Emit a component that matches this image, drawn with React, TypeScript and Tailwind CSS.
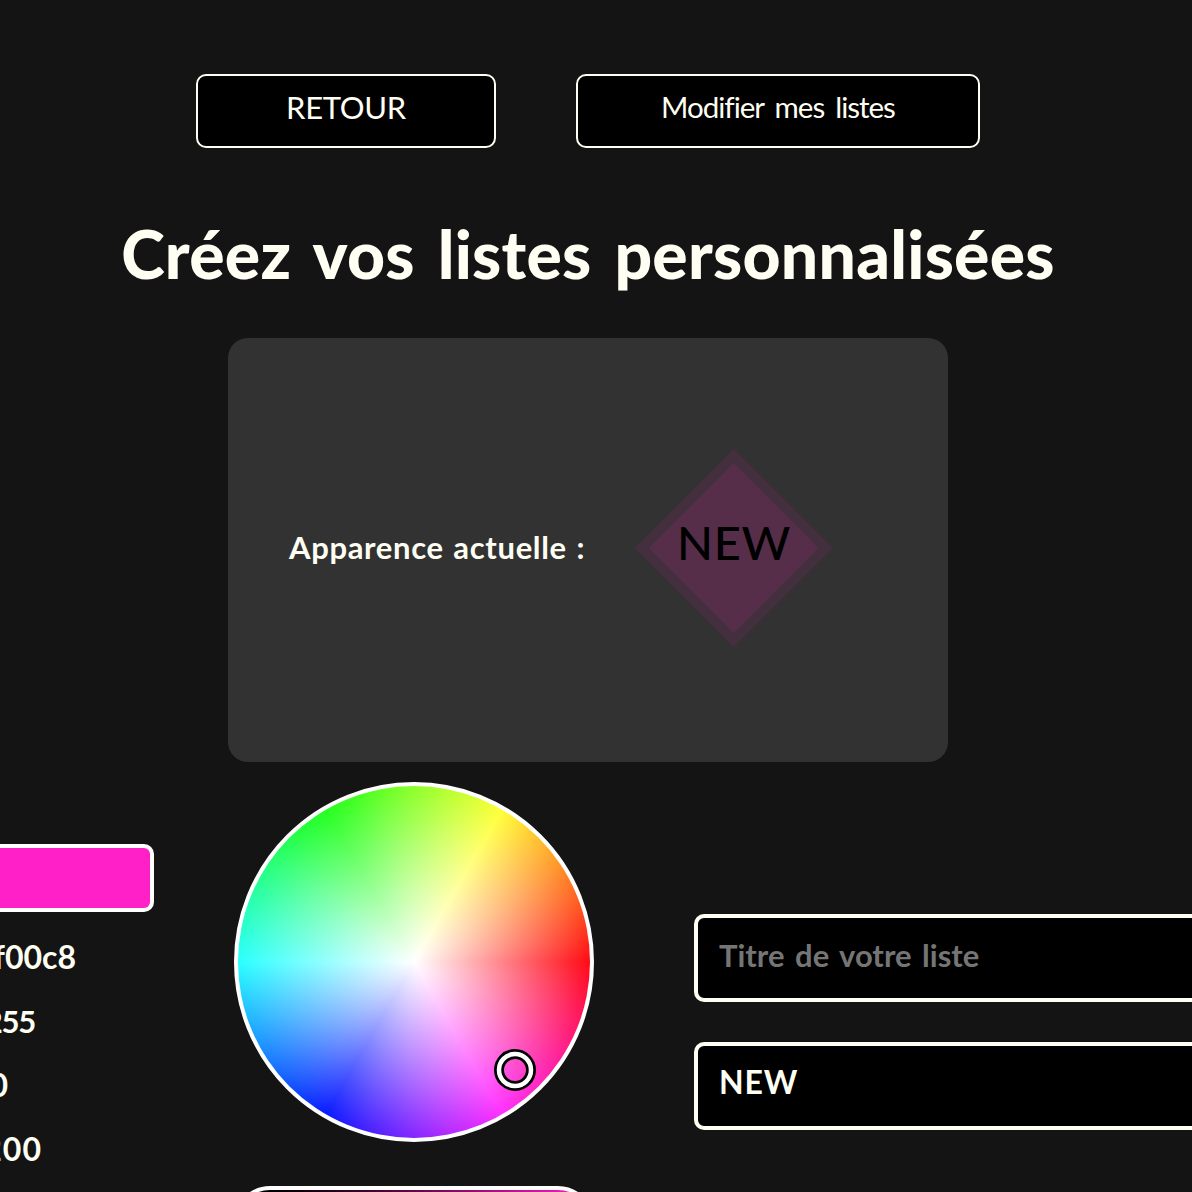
const readings = [
  { text: '#ff00c8', style: 'w-[76px] text-[32px]' },
  { text: '255', style: 'w-[35px] text-[31px] tracking-[-1.2px]' },
  { text: '0', style: 'w-[8px] text-[32px]' },
  { text: '200', style: 'w-[42px] text-[32px] tracking-[1px]' },
];

function Header() {
  return (
    <nav className="flex w-[1176px] justify-center gap-20 pt-[74px] text-[#fffef2]">
      <button className="flex h-[74px] w-[300px] items-start justify-center rounded-[10px] border-2 border-[#fffef2] bg-black pt-[11px] leading-[40px]">
        <span className="text-[31px] tracking-[-0.3px]">RETOUR</span>
      </button>
      <button className="flex h-[74px] w-[404px] items-start justify-center rounded-[10px] border-2 border-[#fffef2] bg-black pt-[11px] leading-[40px]">
        <span className="text-[29.5px] tracking-[-1px] [word-spacing:4.5px]">Modifier mes listes</span>
      </button>
    </nav>
  );
}

function Preview() {
  return (
    <section className="ml-[228px] flex h-[424px] w-[720px] items-center rounded-[20px] bg-[#323232] pb-1">
      <p className="-mt-[2px] ml-[61px] w-[360px] whitespace-nowrap text-[31px] font-bold leading-10 tracking-[0.65px] text-[#fffef2] [word-spacing:1.5px]">
        <span>Apparence actuelle :</span>
      </p>
      <div className="ml-[15px] grid size-[140px] place-items-center">
        <div className="col-start-1 row-start-1 size-[139.5px] rotate-45 border-10 border-[#442f3e] bg-[#562e4a]" />
        <span className="relative col-start-1 row-start-1 mb-[11px] text-[47px] font-medium leading-none tracking-[0.6px] text-black">NEW</span>
      </div>
    </section>
  );
}

function ColorReadout() {
  return (
    <div className="w-[154px] shrink-0 pt-[62px]">
      <div className="h-[68px] rounded-r-[10px] border-4 border-l-0 border-white bg-[#ff20c8]" />
      <ul className="mt-[13px] font-bold text-[#fffef2]">
        {readings.map((r) => (
          <li key={r.text} className={`${r.style} flex h-16 items-center justify-end overflow-hidden`}>
            <span>{r.text}</span>
          </li>
        ))}
      </ul>
    </div>
  );
}

function ColorPicker() {
  return (
    <div className="ml-20 w-[360px] shrink-0">
      <div className="relative size-[360px] rounded-full border-4 border-white bg-white">
        <div className="size-full rounded-full bg-[radial-gradient(circle_closest-side,#fff,transparent),conic-gradient(from_90deg,#ff0a14,#ff30ff_60deg,#0a1aff_120deg,#2affff_180deg,#22ff40_228deg,#24ff20_240deg,#40ff20_250deg,#ffff38_300deg,#ff0a14)]" />
        <svg className="absolute left-[255px] top-[262px] size-11" viewBox="0 0 44 44" fill="none">
          <circle cx="22" cy="22" r="16" stroke="#000" strokeWidth="10" />
          <circle cx="22" cy="22" r="16" stroke="#fff" strokeWidth="4.5" />
        </svg>
      </div>
      <div className="mt-11 h-[72px] rounded-full border-4 border-white bg-linear-to-r from-black to-[#ff20c8]" />
    </div>
  );
}

function ListForm() {
  return (
    <form className="ml-[100px] flex w-[600px] shrink-0 flex-col gap-10 pt-[132px] text-[31px] font-bold leading-10">
      <div className="h-[88px] rounded-[10px] border-4 border-[#fffef2] bg-black pl-[21px] pt-[17px] text-[#757575] [word-spacing:3px]">
        <span>Titre de votre liste</span>
      </div>
      <div className="h-[88px] rounded-[10px] border-4 border-[#fffef2] bg-black pl-[21px] pt-[16px] text-[32px] tracking-[0.8px] text-[#fffef2]">
        <span>NEW</span>
      </div>
    </form>
  );
}

export default function App() {
  return (
    <main className="h-[1192px] w-[1192px] overflow-hidden bg-[#141414] font-['Lato',sans-serif]">
      <Header />
      <h1 className="mt-[62px] h-[128px] w-[1176px] whitespace-nowrap text-center text-[66px] font-black leading-[88px] tracking-[0.25px] text-[#fffef2] [word-spacing:7px]">
        <span>Créez vos listes personnalisées</span>
      </h1>
      <Preview />
      <div className="mt-5 flex items-start">
        <ColorReadout />
        <ColorPicker />
        <ListForm />
      </div>
    </main>
  );
}
